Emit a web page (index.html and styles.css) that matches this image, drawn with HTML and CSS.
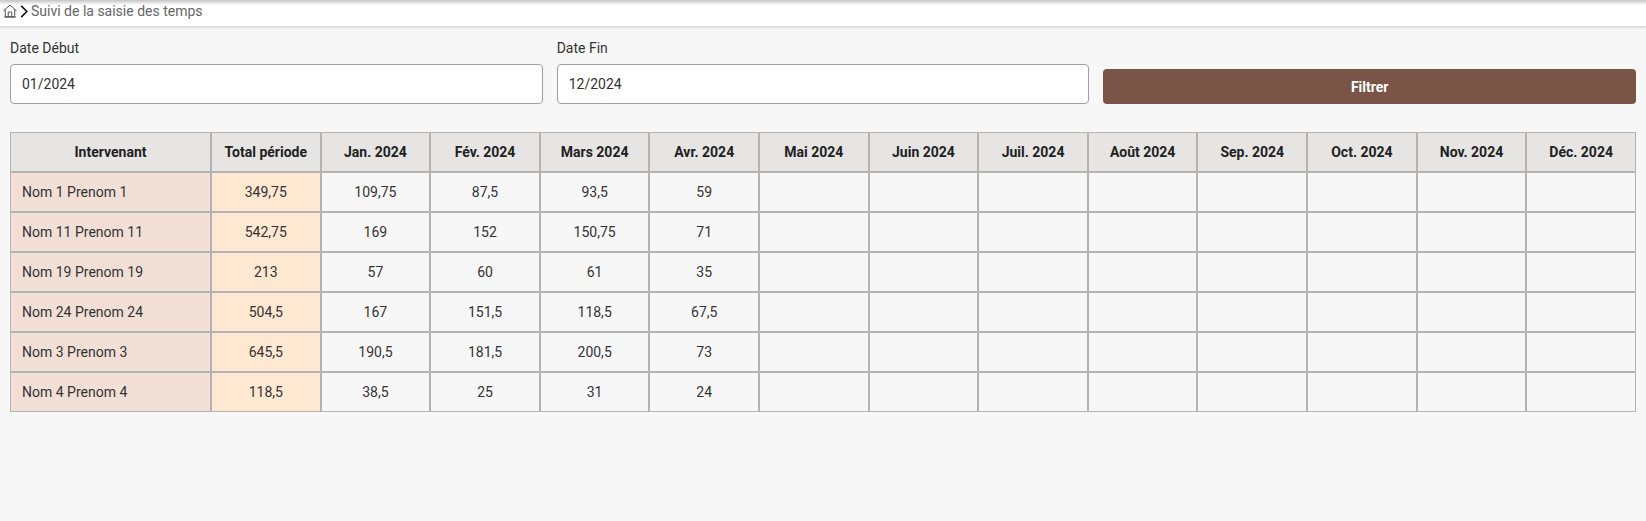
FILE: index.html
```html
<!DOCTYPE html>
<html lang="fr">
<head>
<meta charset="UTF-8">
<title>Suivi de la saisie des temps</title>
<link rel="stylesheet" href="styles.css">
</head>
<body>
<nav class="crumb">
  <svg class="crumb-home" viewBox="0 0 16 16" width="14" height="14" fill="none" stroke="#4a4a4a" stroke-width="1.1">
    <path d="M0.6 7.8 8 1.2l7.4 6.6"/>
    <path d="M2.6 6.2v8.6h10.8V6.2"/>
    <path d="M6 14.8V9.2h4v5.6"/>
    <path d="M1.4 14.8h13.2"/>
  </svg>
  <svg class="crumb-sep" viewBox="0 0 8 14" width="8" height="13" fill="none" stroke="#111" stroke-width="1.7">
    <path d="M1 1l6 6-6 6"/>
  </svg>
  <span class="crumb-text">Suivi de la saisie des temps</span>
</nav>

<main class="page">
  <form class="filters">
    <div class="field">
      <label for="debut">Date Début</label>
      <input id="debut" type="text" value="01/2024">
    </div>
    <div class="field">
      <label for="fin">Date Fin</label>
      <input id="fin" type="text" value="12/2024">
    </div>
    <button type="button" class="btn-filter">Filtrer</button>
  </form>

  <table class="grid">
    <thead>
      <tr>
        <th class="col-name">Intervenant</th>
        <th>Total période</th>
        <th>Jan. 2024</th>
        <th>Fév. 2024</th>
        <th>Mars 2024</th>
        <th>Avr. 2024</th>
        <th>Mai 2024</th>
        <th>Juin 2024</th>
        <th>Juil. 2024</th>
        <th>Août 2024</th>
        <th>Sep. 2024</th>
        <th>Oct. 2024</th>
        <th>Nov. 2024</th>
        <th>Déc. 2024</th>
      </tr>
    </thead>
    <tbody>
      <tr>
        <td class="name">Nom 1 Prenom 1</td><td class="total">349,75</td>
        <td>109,75</td><td>87,5</td><td>93,5</td><td>59</td>
        <td></td><td></td><td></td><td></td><td></td><td></td><td></td><td></td>
      </tr>
      <tr>
        <td class="name">Nom 11 Prenom 11</td><td class="total">542,75</td>
        <td>169</td><td>152</td><td>150,75</td><td>71</td>
        <td></td><td></td><td></td><td></td><td></td><td></td><td></td><td></td>
      </tr>
      <tr>
        <td class="name">Nom 19 Prenom 19</td><td class="total">213</td>
        <td>57</td><td>60</td><td>61</td><td>35</td>
        <td></td><td></td><td></td><td></td><td></td><td></td><td></td><td></td>
      </tr>
      <tr>
        <td class="name">Nom 24 Prenom 24</td><td class="total">504,5</td>
        <td>167</td><td>151,5</td><td>118,5</td><td>67,5</td>
        <td></td><td></td><td></td><td></td><td></td><td></td><td></td><td></td>
      </tr>
      <tr>
        <td class="name">Nom 3 Prenom 3</td><td class="total">645,5</td>
        <td>190,5</td><td>181,5</td><td>200,5</td><td>73</td>
        <td></td><td></td><td></td><td></td><td></td><td></td><td></td><td></td>
      </tr>
      <tr>
        <td class="name">Nom 4 Prenom 4</td><td class="total">118,5</td>
        <td>38,5</td><td>25</td><td>31</td><td>24</td>
        <td></td><td></td><td></td><td></td><td></td><td></td><td></td><td></td>
      </tr>
    </tbody>
  </table>
</main>
</body>
</html>
```

FILE: styles.css
```css
html, body {
  margin: 0;
  height: 100%;
}

body {
  background-color: #f7f7f7;
  color: #333;
  font-family: Roboto, "Liberation Sans", sans-serif;
  font-size: 14px;
  overflow: hidden;
}

.crumb {
  display: flex;
  align-items: center;
  gap: 3px;
  height: 26px;
  padding: 0 0 4px 3px;
  box-sizing: border-box;
  background-color: #fff;
  background-image: linear-gradient(#c4c4c4, #fff 5px);
  box-shadow: 0 1px 3px rgba(0,0,0,0.2);
}

.crumb-text {
  color: #666;
  font-size: 14px;
}

.page {
  padding: 14px 10px 0;
}

.filters {
  display: grid;
  grid-template-columns: repeat(3, 1fr);
  column-gap: 14px;
  align-items: end;
}

.field {
  display: flex;
  flex-direction: column;
  gap: 7px;
}

.field label {
  font-size: 14px;
  line-height: 17px;
}

.field input {
  height: 40px;
  box-sizing: border-box;
  padding: 0 11px;
  border: 1px solid #a0a0a0;
  border-radius: 4px;
  background-color: #fff;
  color: #333;
  font-family: inherit;
  font-size: 14px;
}

.btn-filter {
  height: 35px;
  border: 0;
  border-radius: 4px;
  background-color: #7a5547;
  color: #fff;
  font-family: inherit;
  font-size: 14px;
  font-weight: 700;
}

.grid {
  width: 100%;
  margin-top: 28px;
  table-layout: fixed;
  border-collapse: separate;
  border-spacing: 0;
}

.grid th, .grid td {
  height: 40px;
  box-sizing: border-box;
  padding: 0 10px;
  border: 1px solid #b3b3b3;
  text-align: center;
  white-space: nowrap;
}

.grid th {
  background-color: #e7e5e3;
  color: #212121;
  font-weight: 700;
}

.grid .col-name {
  width: 201px;
}

.grid td.name {
  padding-left: 11px;
  background-color: #f2e0d6;
  text-align: left;
}

.grid td.total {
  background-color: #ffe8d1;
}
```
